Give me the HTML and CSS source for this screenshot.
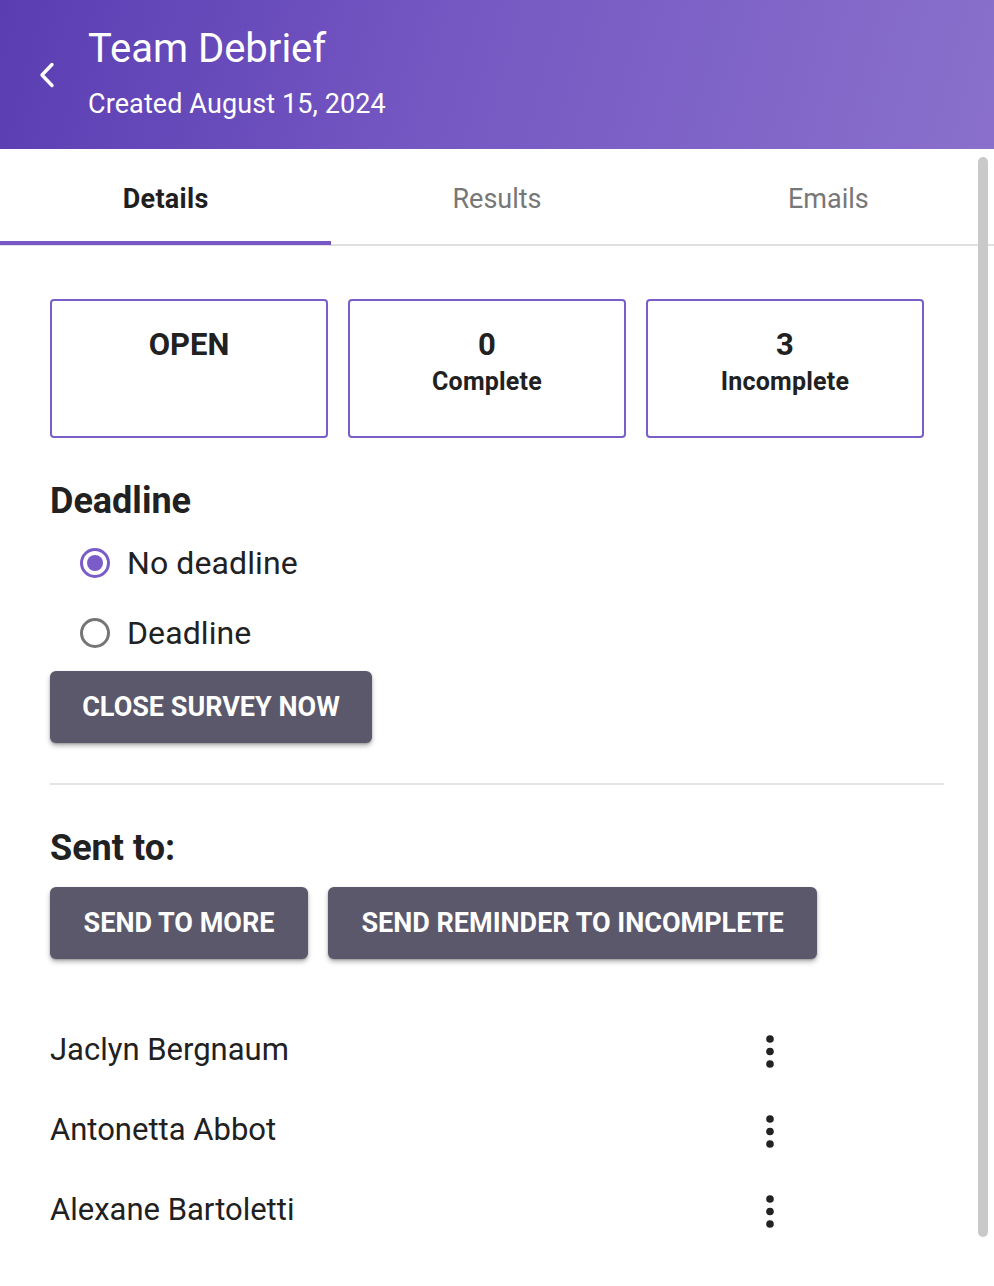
FILE: index.html
```html
<!DOCTYPE html>
<html lang="en">
<head>
<meta charset="utf-8">
<title>Team Debrief</title>
<link rel="stylesheet" href="styles.css">
</head>
<body>
<div class="page">
  <header class="header">
    <button class="back" aria-label="Back">
      <svg width="18" height="26" viewBox="0 0 18 26"><path d="M14 2.5 L4 13 L14 23.5" fill="none" stroke="#fff" stroke-width="3.4" stroke-linecap="round" stroke-linejoin="round"/></svg>
    </button>
    <div class="titles">
      <div class="title">Team Debrief</div>
      <div class="subtitle">Created August 15, 2024</div>
    </div>
  </header>

  <nav class="tabs">
    <div class="tab active">Details</div>
    <div class="tab">Results</div>
    <div class="tab">Emails</div>
  </nav>

  <main class="content">
    <div class="stats">
      <div class="stat"><div class="stat-num">OPEN</div></div>
      <div class="stat"><div class="stat-num">0</div><div class="stat-label">Complete</div></div>
      <div class="stat"><div class="stat-num">3</div><div class="stat-label">Incomplete</div></div>
    </div>

    <h2 class="heading">Deadline</h2>
    <div class="radios">
      <label class="radio-row"><span class="radio checked"></span><span class="radio-label">No deadline</span></label>
      <label class="radio-row"><span class="radio"></span><span class="radio-label">Deadline</span></label>
    </div>
    <button class="btn close-btn">CLOSE SURVEY NOW</button>

    <hr class="divider">

    <h2 class="heading">Sent to:</h2>
    <div class="btn-row">
      <button class="btn">SEND TO MORE</button>
      <button class="btn">SEND REMINDER TO INCOMPLETE</button>
    </div>

    <ul class="people">
      <li class="person"><span class="name">Jaclyn Bergnaum</span><span class="kebab"><svg width="10" height="36" viewBox="0 0 10 36"><circle cx="5" cy="5" r="3.8"/><circle cx="5" cy="17.5" r="3.8"/><circle cx="5" cy="30" r="3.8"/></svg></span></li>
      <li class="person"><span class="name">Antonetta Abbot</span><span class="kebab"><svg width="10" height="36" viewBox="0 0 10 36"><circle cx="5" cy="5" r="3.8"/><circle cx="5" cy="17.5" r="3.8"/><circle cx="5" cy="30" r="3.8"/></svg></span></li>
      <li class="person"><span class="name">Alexane Bartoletti</span><span class="kebab"><svg width="10" height="36" viewBox="0 0 10 36"><circle cx="5" cy="5" r="3.8"/><circle cx="5" cy="17.5" r="3.8"/><circle cx="5" cy="30" r="3.8"/></svg></span></li>
    </ul>
  </main>

  <div class="scrollbar"></div>
</div>
</body>
</html>
```
FILE: styles.css
```css
* { box-sizing: border-box; }
html, body { margin: 0; padding: 0; background: #fff; }
body {
  font-family: Roboto, "Noto Sans", "Liberation Sans", sans-serif;
  color: #212121;
}
.page { position: relative; width: 994px; min-height: 1286px; overflow: hidden; }

.header {
  height: 149px;
  display: flex;
  align-items: flex-start;
  padding: 25px 0 0 38px;
  background: linear-gradient(105deg, #5a3db2 0%, #7558c2 45%, #8a70cc 100%);
  color: #fff;
}
.back {
  background: none; border: 0; padding: 0; margin: 37px 0 0 0;
  width: 18px; height: 26px; display: block; cursor: pointer;
}
.titles { margin-left: 32px; }
.title { font-size: 40px; line-height: 48px; font-weight: 400; }
.subtitle { font-size: 27px; line-height: 36px; margin-top: 13px; font-weight: 400; letter-spacing: 0.1px; }

.tabs {
  display: flex;
  height: 97px;
  border-bottom: 2px solid #e0e0e0;
}
.tab {
  flex: 1;
  position: relative;
  display: flex;
  align-items: center;
  justify-content: center;
  padding-top: 4px;
  font-size: 27px;
  color: #777;
}
.tab.active { color: #1f1f1f; font-weight: 700; letter-spacing: 0.3px; }
.tab.active::after {
  content: "";
  position: absolute;
  left: 0; right: 0; bottom: -1px;
  height: 4px;
  background: #7558c6;
}

.content { padding: 0 50px; }

.stats { display: flex; gap: 20px; margin-top: 53px; }
.stat {
  width: 278px;
  height: 139px;
  border: 2px solid #7a5ec8;
  border-radius: 4px;
  padding-top: 26px;
  text-align: center;
}
.stat-num { font-size: 31px; line-height: 36px; font-weight: 700; }
.stat-label { font-size: 25px; line-height: 38px; font-weight: 700; letter-spacing: 0.2px; }

.heading {
  margin: 42px 0 0 0;
  font-size: 36px;
  line-height: 42px;
  font-weight: 700;
}

.radios { margin-top: 6px; padding-left: 30px; }
.radio-row { display: flex; align-items: center; height: 70px; }
.radio {
  width: 30px; height: 30px;
  border: 3px solid #757575;
  border-radius: 50%;
  position: relative;
  flex: none;
}
.radio.checked { border-color: #7a5cc8; }
.radio.checked::after {
  content: "";
  position: absolute;
  left: 4px; top: 4px;
  width: 16px; height: 16px;
  border-radius: 50%;
  background: #7a5cc8;
}
.radio-label { margin-left: 17px; font-size: 32px; letter-spacing: 0.1px; }

.btn {
  height: 72px;
  padding: 0 32px;
  border: 0;
  border-radius: 6px;
  background: #5a586a;
  color: #fff;
  font-family: inherit;
  font-size: 27px;
  font-weight: 700;
  box-shadow: 0 3px 5px rgba(0,0,0,0.28), 0 1px 2px rgba(0,0,0,0.2);
}
.close-btn { margin-top: 3px; display: block; width: 322px; padding: 0; }

.divider {
  margin: 40px 0 0 0;
  width: 894px;
  height: 2px;
  border: 0;
  background: #e4e4e4;
}

.btn-row { display: flex; gap: 20px; margin-top: 18px; }
.btn-row .btn:first-child { width: 258px; padding: 0; }
.btn-row .btn:last-child { width: 489px; padding: 0; }

.people { list-style: none; margin: 50px 0 0 0; padding: 0; width: 744px; }
.person {
  display: flex;
  align-items: center;
  justify-content: space-between;
  height: 80px;
}
.name { font-size: 31px; }
.kebab {
  width: 48px; height: 48px;
  display: flex; align-items: center; justify-content: center;
  margin-top: 6px;
}
.kebab svg { fill: #222; }

.scrollbar {
  position: absolute;
  top: 157px;
  left: 978px;
  width: 10px;
  height: 1080px;
  border-radius: 5px;
  background: #c9c9c9;
}
```
